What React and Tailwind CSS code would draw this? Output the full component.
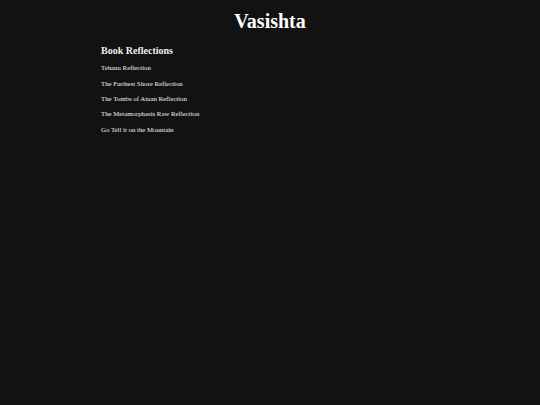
const reflections = [
  "Tehanu Reflection",
  "The Farthest Shore Reflection",
  "The Tombs of Atuan Reflection",
  "The Metamorphasis Raw Reflection",
  "Go Tell it on the Mountain",
];

export default function App() {
  return (
    <div className="min-h-[405px] w-full bg-[#121212] text-white font-['Liberation_Serif','Times_New_Roman',serif]">
      <h1 className="pt-[3px] text-center text-[20px] font-bold leading-[36px]">
        Vasishta
      </h1>
      <div className="mx-auto mt-[4.6px] w-[338px]">
        <h2 className="text-[10px] font-bold leading-[14px] text-[#eeeeee]">
          Book Reflections
        </h2>
        <ul className="mt-[2.8px] flex flex-col">
          {reflections.map((title) => (
            <li key={title} className="text-[6.8px] leading-[15.3px]">
              <a href="#" className="text-[#f2f2f2]">
                {title}
              </a>
            </li>
          ))}
        </ul>
      </div>
    </div>
  );
}
